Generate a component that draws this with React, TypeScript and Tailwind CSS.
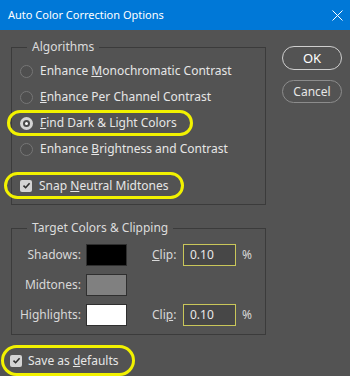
import React from 'react';

const font = { fontFamily: '"Noto Sans", "Open Sans", sans-serif' };

function U({ children }: { children: React.ReactNode }) {
  return <span className="underline underline-offset-[1px] decoration-1">{children}</span>;
}

function Radio({ checked }: { checked?: boolean }) {
  if (checked) {
    return (
      <span className="w-[13px] h-[13px] rounded-full bg-[#d4d4d4] flex items-center justify-center">
        <span className="w-[7px] h-[7px] rounded-full bg-[#4a4a4a] flex items-center justify-center">
          <span className="w-[3px] h-[3px] rounded-full bg-white" />
        </span>
      </span>
    );
  }
  return <span className="w-[13px] h-[13px] rounded-full border border-[#767676] bg-[#4f4f4f]" />;
}

function Check() {
  return (
    <span className="w-[12px] h-[12px] rounded-[2px] bg-[#d4d4d4] flex items-center justify-center">
      <svg width="9" height="9" viewBox="0 0 9 9">
        <path d="M1.5 4.6 L3.6 6.7 L7.6 2.2" fill="none" stroke="#2e2e2e" strokeWidth="1.6" />
      </svg>
    </span>
  );
}

function Oval({ className }: { className: string }) {
  return <span className={`absolute rounded-full border-[3px] border-[#f2f200] pointer-events-none ${className}`} />;
}

export default function App() {
  return (
    <div className="w-[350px] h-[376px] bg-[#535353] flex flex-col overflow-hidden text-[12px] text-[#e6e6e6]" style={font}>
      <div className="h-[30px] bg-[#0078d7] flex items-center justify-between pl-[8px] pr-[7px] text-white text-[11px] shrink-0">
        <span>Auto Color Correction Options</span>
        <svg width="11" height="11" viewBox="0 0 11 11">
          <path d="M0.5 0.5 L10.5 10.5 M10.5 0.5 L0.5 10.5" stroke="#fff" strokeWidth="1" />
        </svg>
      </div>

      <div className="flex">
        <div className="pl-[11px] w-[266px] flex flex-col">
          <div className="relative mt-[17px] h-[158px] border border-[#3b3b3b] pt-[10px] flex flex-col">
            <span className="absolute -top-[9px] left-[15px] px-[5px] bg-[#535353] text-[#dcdcdc] leading-[16px]">Algorithms</span>
            <div className="h-[26px] flex items-center pl-[8px] gap-[7px]">
              <Radio /><span>Enhance <U>M</U>onochromatic Contrast</span>
            </div>
            <div className="h-[26px] flex items-center pl-[8px] gap-[7px]">
              <Radio /><span><U>E</U>nhance Per Channel Contrast</span>
            </div>
            <div className="relative h-[26px] flex items-center pl-[8px] gap-[7px]">
              <Oval className="-left-[5px] top-0 w-[186px] h-[26px]" />
              <Radio checked /><span><U>F</U>ind Dark &amp; Light Colors</span>
            </div>
            <div className="h-[26px] flex items-center pl-[8px] gap-[7px]">
              <Radio /><span>Enhance <U>B</U>rightness and Contrast</span>
            </div>
            <div className="relative mt-[10px] h-[27px] flex items-center pl-[8px] gap-[7px]">
              <Oval className="-left-[8px] top-0 w-[180px] h-[27px]" />
              <Check /><span>Snap <U>N</U>eutral Midtones</span>
            </div>
          </div>

          <div className="relative mt-[23px] h-[107px] border border-[#3b3b3b] pt-[15px] flex flex-col gap-[9px]">
            <span className="absolute -top-[9px] left-[15px] px-[5px] bg-[#535353] text-[#dcdcdc] leading-[16px]">Target Colors &amp; Clipping</span>
            <div className="flex items-center h-[21px]">
              <span className="w-[69px] text-right text-[#d8d8d8]">Shadows:</span>
              <span className="ml-[5px] w-[41px] h-[22px] bg-black border border-[#2f2f2f]" />
              <span className="ml-[25px] w-[31px] text-[#d8d8d8]"><U>C</U>lip:</span>
              <span className="w-[53px] h-[22px] border border-[#c9c65a] bg-[#474747] flex items-center pl-[6px] text-[#e8e8e8]">0.10</span>
              <span className="ml-[6px] text-[#d8d8d8]">%</span>
            </div>
            <div className="flex items-center h-[21px]">
              <span className="w-[69px] text-right text-[#d8d8d8]">Midtones:</span>
              <span className="ml-[5px] w-[41px] h-[22px] bg-[#808080] border border-[#2f2f2f]" />
            </div>
            <div className="flex items-center h-[21px]">
              <span className="w-[69px] text-right text-[#d8d8d8]">Highlights:</span>
              <span className="ml-[5px] w-[41px] h-[22px] bg-white border border-[#2f2f2f]" />
              <span className="ml-[25px] w-[31px] text-[#d8d8d8]">Cli<U>p</U>:</span>
              <span className="w-[53px] h-[22px] border border-[#c9c65a] bg-[#474747] flex items-center pl-[6px] text-[#e8e8e8]">0.10</span>
              <span className="ml-[6px] text-[#d8d8d8]">%</span>
            </div>
          </div>

          <div className="relative mt-[10px] -ml-[1px] h-[31px] flex items-center gap-[6px]">
            <Oval className="-left-[9px] top-0 w-[134px] h-[31px]" />
            <Check /><span>Save as <U>d</U>efaults</span>
          </div>
        </div>

        <div className="pl-[16px] pt-[16px] flex flex-col gap-[10px]">
          <button className="w-[60px] h-[24px] rounded-full border-[1.5px] border-[#cfcfcf] text-white text-[13px] leading-none">OK</button>
          <button className="w-[60px] h-[23px] rounded-full border border-[#8c8c8c] text-[#e6e6e6] text-[12px] leading-none">Cancel</button>
        </div>
      </div>
    </div>
  );
}
